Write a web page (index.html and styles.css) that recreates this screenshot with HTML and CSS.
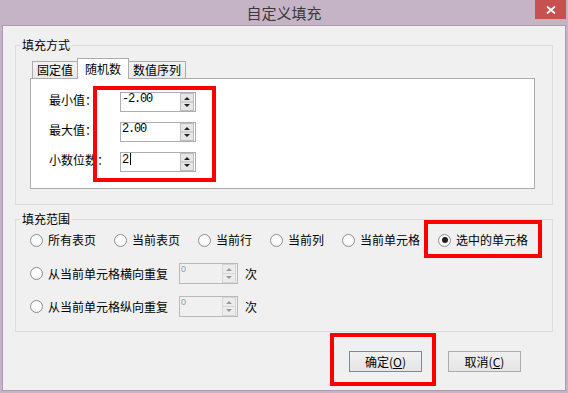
FILE: index.html
```html
<!DOCTYPE html>
<html lang="zh-CN">
<head>
  <meta charset="UTF-8">
  <title>自定义填充</title>
  <link rel="stylesheet" href="styles.css">
</head>
<body>
  <div class="window">
    <div class="titlebar">
      <span></span>
      <span class="title">自定义填充</span>
      <span class="close">
        <svg width="10" height="8" viewBox="0 0 10 8"><path d="M1 0.5 L9 7.5 M9 0.5 L1 7.5" stroke="#fff" stroke-width="1.8"/></svg>
      </span>
    </div>

    <div class="client">
      <fieldset class="group">
        <legend>填充方式</legend>
        <div class="mode-body">
          <div class="tabs">
            <span class="tab">固定值</span>
            <span class="tab active">随机数</span>
            <span class="tab">数值序列</span>
          </div>
          <div class="pane">
            <div class="fields marked">
              <label>最小值：</label>
              <div class="spin"><span class="val">-2.00</span>
                <svg class="arrows" width="14" height="18" viewBox="0 0 14 18"><rect x="0.5" y="0.5" width="13" height="17" fill="#e6e6e6" stroke="#bdbdbd"/><path d="M1 9 H13" stroke="#bdbdbd"/><path d="M4 7 L7 4 L10 7 Z M4 11 L10 11 L7 14 Z" fill="#222"/></svg>
              </div>
              <label>最大值：</label>
              <div class="spin"><span class="val">2.00</span>
                <svg class="arrows" width="14" height="18" viewBox="0 0 14 18"><rect x="0.5" y="0.5" width="13" height="17" fill="#e6e6e6" stroke="#bdbdbd"/><path d="M1 9 H13" stroke="#bdbdbd"/><path d="M4 7 L7 4 L10 7 Z M4 11 L10 11 L7 14 Z" fill="#222"/></svg>
              </div>
              <label>小数位数：</label>
              <div class="spin"><span class="val">2<span class="caret"></span></span>
                <svg class="arrows" width="14" height="18" viewBox="0 0 14 18"><rect x="0.5" y="0.5" width="13" height="17" fill="#e6e6e6" stroke="#bdbdbd"/><path d="M1 9 H13" stroke="#bdbdbd"/><path d="M4 7 L7 4 L10 7 Z M4 11 L10 11 L7 14 Z" fill="#222"/></svg>
              </div>
            </div>
          </div>
        </div>
      </fieldset>

      <fieldset class="group range">
        <legend>填充范围</legend>
        <div class="range-body">
          <div class="row">
            <span class="opt"><i class="radio"></i>所有表页</span>
            <span class="opt"><i class="radio"></i>当前表页</span>
            <span class="opt"><i class="radio"></i>当前行</span>
            <span class="opt"><i class="radio"></i>当前列</span>
            <span class="opt"><i class="radio"></i>当前单元格</span>
            <span class="opt marked"><i class="radio checked"></i>选中的单元格</span>
          </div>
          <div class="row repeat">
            <span class="opt"><i class="radio"></i>从当前单元格横向重复</span>
            <div class="spin off"><span class="val">0</span>
              <svg class="arrows" width="14" height="19" viewBox="0 0 14 19"><rect x="0.5" y="0.5" width="13" height="18" fill="#ececec" stroke="#d6d6d6"/><path d="M1 9.5 H13" stroke="#d6d6d6"/><path d="M4 7 L7 4 L10 7 Z M4 12 L10 12 L7 15 Z" fill="#9a9a9a"/></svg>
            </div>
            <span class="unit">次</span>
          </div>
          <div class="row repeat">
            <span class="opt"><i class="radio"></i>从当前单元格纵向重复</span>
            <div class="spin off"><span class="val">0</span>
              <svg class="arrows" width="14" height="19" viewBox="0 0 14 19"><rect x="0.5" y="0.5" width="13" height="18" fill="#ececec" stroke="#d6d6d6"/><path d="M1 9.5 H13" stroke="#d6d6d6"/><path d="M4 7 L7 4 L10 7 Z M4 12 L10 12 L7 15 Z" fill="#9a9a9a"/></svg>
            </div>
            <span class="unit">次</span>
          </div>
        </div>
      </fieldset>

      <div class="actions">
        <span class="marked-btn"><button class="btn default">确定(<u>O</u>)</button></span>
        <button class="btn">取消(<u>C</u>)</button>
      </div>
    </div>
  </div>
</body>
</html>
```

FILE: styles.css
```css
body {
  margin: 0;
  font-family: "Noto Sans CJK SC", "Liberation Sans", sans-serif;
  font-size: 12px;
  color: #000;
}
.window {
  width: 568px;
  height: 393px;
  display: flex;
  flex-direction: column;
  background: #c4b4c6;
}
.titlebar {
  height: 25px;
  display: grid;
  grid-template-columns: 1fr auto 1fr;
  align-items: start;
}
.title {
  font-size: 15px;
  line-height: 25px;
  color: #3a3a3a;
}
.close {
  justify-self: end;
  width: 31px;
  height: 19px;
  margin-right: 2px;
  background: #c75050;
  display: flex;
  align-items: center;
  justify-content: center;
}
.client {
  flex: 1;
  margin: 0 2px 2px;
  border: 1px solid #ab9bad;
  background: #f0f0f0;
}

/* group boxes */
.group {
  margin: 11px 12px 0;
  padding: 0;
  border: 1px solid #dcdcdc;
  min-inline-size: 0;
}
.group legend {
  margin-left: 4px;
  padding: 0 2px;
  line-height: 16px;
}
.group.range {
  margin-top: 6px;
}
.mode-body {
  padding: 5px 17px 15px 14px;
}

/* tabs */
.tabs {
  display: flex;
  align-items: flex-end;
  margin-left: 2px;
}
.tab {
  height: 17px;
  box-sizing: border-box;
  padding: 0 4px;
  border: 1px solid #acacac;
  border-bottom: none;
  line-height: 16px;
  background: linear-gradient(#f3f3f3, #e8e8e8);
}
.tab.active {
  position: relative;
  z-index: 1;
  height: 21px;
  margin: 0 -1px -1px;
  padding: 0 7px;
  line-height: 19px;
  background: #fff;
}
.pane {
  height: 111px;
  box-sizing: border-box;
  padding: 13px 0 0 18px;
  border: 1px solid #acacac;
  background: #fff;
}
.fields {
  position: relative;
  display: grid;
  grid-template-columns: 71px 76px;
  row-gap: 10px;
  width: 147px;
}
.fields label {
  line-height: 16px;
}
.marked::after {
  content: "";
  position: absolute;
  border: 4px solid #ff0000;
  box-sizing: border-box;
  pointer-events: none;
}
.fields.marked::after {
  left: 44px;
  top: -6px;
  width: 123px;
  height: 96px;
}

/* spin boxes */
.spin {
  display: flex;
  align-items: flex-start;
  width: 76px;
  height: 20px;
  box-sizing: border-box;
  border: 1px solid #abadb3;
  background: #fff;
}
.spin .val {
  flex: 1;
  padding-left: 1px;
  font-family: "Liberation Mono", monospace;
  font-size: 12px;
  letter-spacing: -1.2px;
  line-height: 13px;
}
.caret {
  display: inline-block;
  width: 1px;
  height: 12px;
  margin-left: 2px;
  vertical-align: -2px;
  background: #000;
}
.spin .arrows {
  display: block;
  margin-right: 1px;
}
.spin.off {
  width: 59px;
  height: 21px;
  margin-left: 11px;
  border-color: #b9b9b9;
  background: #f0f0f0;
}
.spin.off .val {
  padding-left: 1px;
  font-family: "Liberation Sans", sans-serif;
  font-size: 9px;
  letter-spacing: 0;
  line-height: 11px;
  color: #9a9a9a;
}
.unit {
  margin-left: 7px;
}

/* radio rows */
.range-body {
  padding: 3px 0 14px 14px;
}
.row {
  display: flex;
  align-items: center;
  height: 20px;
}
.row.repeat {
  height: 21px;
  margin-top: 13px;
}
.row.repeat + .row.repeat {
  margin-top: 12px;
}
.opt {
  position: relative;
  display: inline-flex;
  align-items: center;
  margin-right: 18px;
  line-height: 20px;
  white-space: nowrap;
}
.row.repeat .opt {
  margin-right: 0;
}
.radio {
  position: relative;
  width: 13px;
  height: 13px;
  box-sizing: border-box;
  margin-right: 5px;
  border: 1px solid #8e8e8e;
  border-radius: 50%;
  background: radial-gradient(circle at 50% 40%, #fff 40%, #ececec);
}
.radio.checked::after {
  content: "";
  position: absolute;
  left: 2.5px;
  top: 2.5px;
  width: 6px;
  height: 6px;
  border-radius: 50%;
  background: #1e1e1e;
}
.opt.marked::after {
  left: -14px;
  top: -10px;
  right: -14px;
  bottom: -8px;
}

/* buttons */
.actions {
  display: flex;
  justify-content: flex-end;
  gap: 26px;
  margin: 19px 44px 0 0;
}
.marked-btn {
  position: relative;
  display: flex;
}
.marked-btn::after {
  content: "";
  position: absolute;
  left: -19px;
  top: -18px;
  right: -14px;
  bottom: -14px;
  border: 4px solid #ff0000;
}
.btn {
  width: 73px;
  height: 21px;
  padding: 0;
  font-family: "Noto Sans CJK SC", "Liberation Sans", sans-serif;
  font-size: 12px;
  line-height: 19px;
  color: #000;
  border: 1px solid #acacac;
  background: linear-gradient(#f0f0f0, #e5e5e5);
}
.btn.default {
  border-color: #3c9be8;
}
```
